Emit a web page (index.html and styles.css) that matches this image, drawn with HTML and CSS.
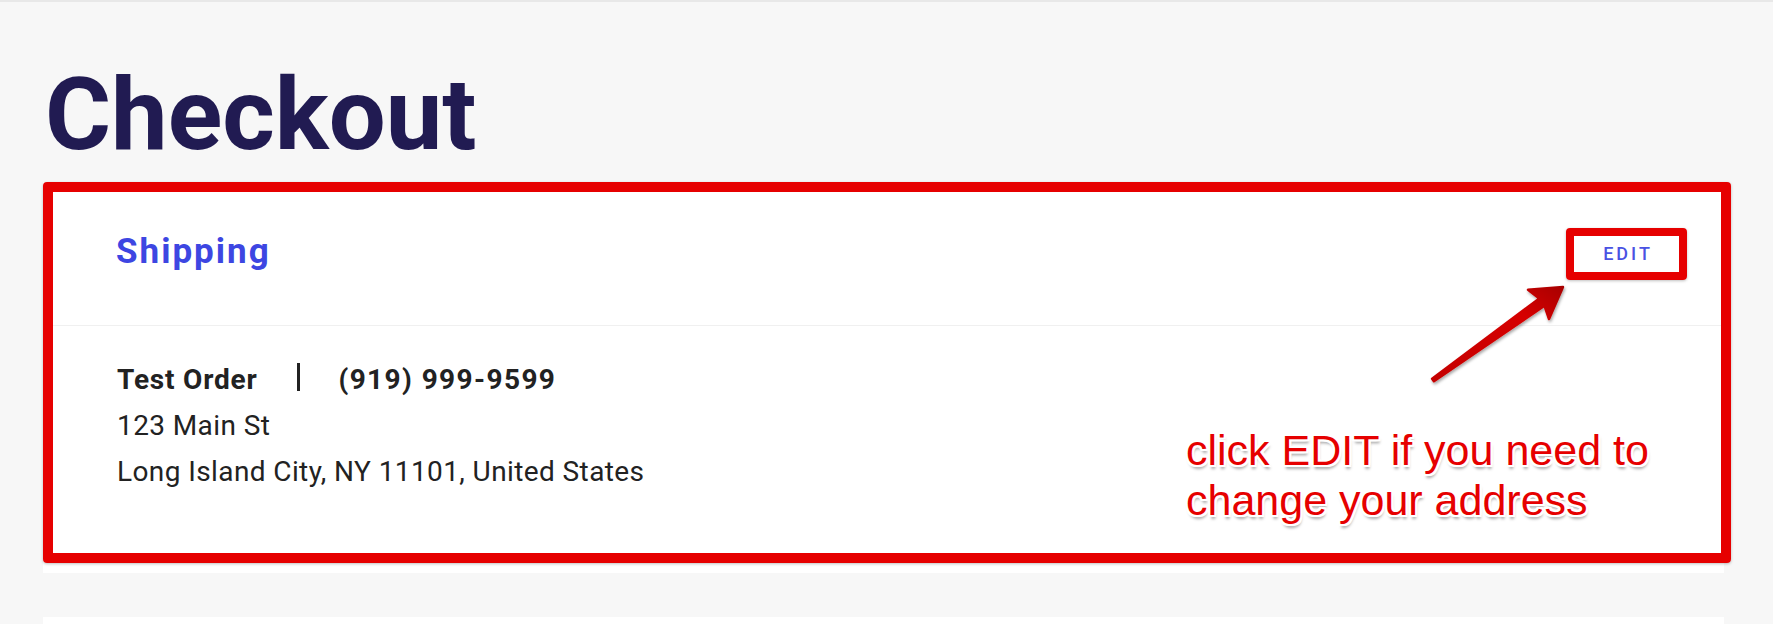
FILE: index.html
```html
<!DOCTYPE html>
<html lang="en">
<head>
  <meta charset="UTF-8">
  <title>Checkout</title>
  <link rel="stylesheet" href="styles.css">
</head>
<body>

  <main class="page">
    <h1 class="page-title">Checkout</h1>

    <section class="card shipping">
      <header class="card-head">
        <h2 class="card-title">Shipping</h2>
        <button class="edit-btn">EDIT</button>
      </header>

      <div class="card-body">
        <p class="addr-name"><span class="name">Test Order</span><span class="sep"></span><span class="phone">(919) 999-9599</span></p>
        <p>123 Main St</p>
        <p>Long Island City, NY 11101, United States</p>
      </div>

      <!-- annotation layer -->
      <div class="note-frame"></div>
      <svg class="note-arrow" width="160" height="120" viewBox="0 0 160 120">
        <defs>
          <linearGradient id="arrowFill" x1="0" y1="1" x2="1" y2="0">
            <stop offset="0" stop-color="#c40000"/>
            <stop offset="0.7" stop-color="#d60000"/>
            <stop offset="1" stop-color="#a80000"/>
          </linearGradient>
          <filter id="arrowShadow" x="-20%" y="-20%" width="140%" height="140%">
            <feDropShadow dx="1" dy="2" stdDeviation="1.5" flood-color="#000" flood-opacity="0.35"/>
          </filter>
        </defs>
        <path d="M9.1 101.8 L116.3 21.4 L105 12.8 L140 10 L126 42 L121.5 28.8 L10.9 104.2 Z"
              fill="url(#arrowFill)" stroke="url(#arrowFill)" stroke-width="2.5" stroke-linejoin="round"
              filter="url(#arrowShadow)"/>
      </svg>
      <p class="note-text">click EDIT if you need to<br>change your address</p>
    </section>

    <section class="card next"></section>
  </main>

</body>
</html>
```

FILE: styles.css
```css
body {
  margin: 0;
  font-family: Roboto, "Liberation Sans", sans-serif;
  background-color: #f7f7f7;
  border-top: 2px solid #e8e8e8;
  overflow: hidden;
}

.page {
  padding: 0 49px 0 43px;
}

.page-title {
  margin: 62px 0 17px 2px;
  font-size: 101px;
  line-height: 1;
  font-weight: 700;
  color: #211b52;
}

.card {
  position: relative;
  background-color: #fff;
}

.card-head {
  display: flex;
  justify-content: space-between;
  align-items: center;
  height: 144px;
  padding: 0 45px 0 73px;
  border-bottom: 1px solid #f0f0f0;
  box-sizing: border-box;
}

.card-title {
  margin: 0 0 5px 0;
  font-size: 35px;
  font-weight: 700;
  letter-spacing: 2px;
  color: #3d46e2;
}

.edit-btn {
  position: relative;
  width: 105px;
  height: 36px;
  padding: 0 0 0 3px;
  border: none;
  background-color: #fff;
  font-family: inherit;
  font-size: 18px;
  font-weight: 500;
  letter-spacing: 3px;
  color: #4a52e3;
  cursor: pointer;
}

/* red highlight drawn around the button */
.edit-btn::after {
  content: "";
  position: absolute;
  inset: -8px;
  border: 8px solid #e60000;
  border-radius: 4px;
  box-shadow: 0 1px 3px rgba(0, 0, 0, 0.25);
}

.card-body {
  padding: 31px 74px 78px;
  font-size: 28px;
  line-height: 46px;
  letter-spacing: 0.4px;
  color: #222;
}

.card-body p {
  margin: 0;
}

.addr-name {
  font-weight: 700;
}

.name {
  letter-spacing: 0.8px;
}

.sep {
  display: inline-block;
  width: 3px;
  height: 28px;
  margin: 0 38px 0 40px;
  vertical-align: -2px;
  background-color: #222;
}

.phone {
  letter-spacing: 1.4px;
}

.note-frame {
  position: absolute;
  top: 0;
  left: 0;
  right: -7px;
  bottom: 10px;
  border: 10px solid #e60000;
  border-radius: 4px;
  box-shadow: 0 1px 3px rgba(0, 0, 0, 0.25);
}

.note-arrow {
  position: absolute;
  left: 1380px;
  top: 95px;
}

.note-text {
  position: absolute;
  left: 1143px;
  top: 243px;
  margin: 0;
  font-family: "Liberation Sans", Arial, sans-serif;
  font-size: 43px;
  line-height: 50px;
  color: #e60000;
  text-shadow:
    -2px -2px 0 #fff, 2px -2px 0 #fff, -2px 2px 0 #fff, 2px 2px 0 #fff,
    0 -2px 0 #fff, 0 2px 0 #fff, -2px 0 0 #fff, 2px 0 0 #fff,
    1px 4px 3px rgba(0, 0, 0, 0.35);
}

.next {
  margin-top: 44px;
  height: 120px;
}
```
